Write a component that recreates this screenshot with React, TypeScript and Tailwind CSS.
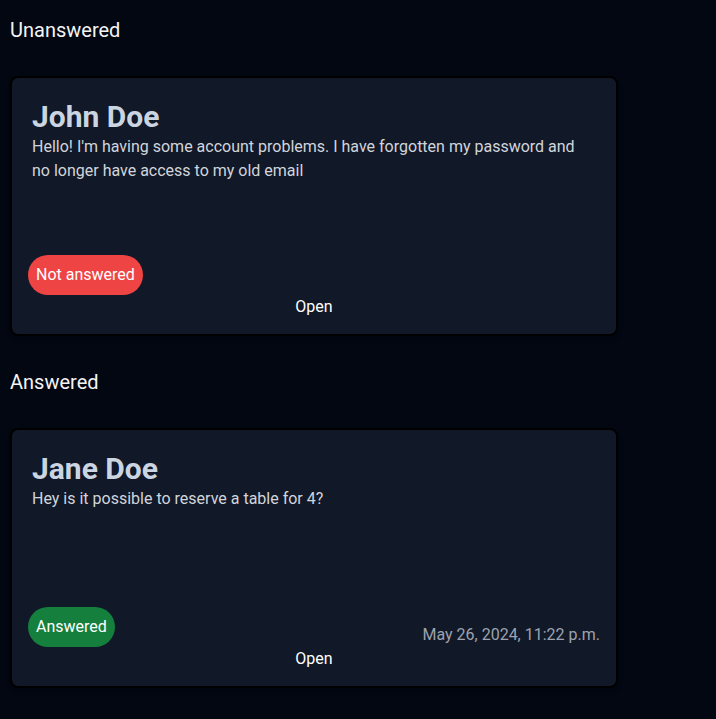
import React from "react";

type Msg = {
  name: string;
  text: string;
  answered: boolean;
  date?: string;
};

function Card({ m }: { m: Msg }) {
  return (
    <div className="w-[608px] h-[260px] rounded-lg border-2 border-black bg-[#111827] px-4 pt-[17px] pb-[15px] flex flex-col shadow-md">
      <div className="p-1">
        <h2 className="text-[30px] leading-9 font-bold text-[#cbd5e1]">{m.name}</h2>
        <p className="text-base leading-6 text-[#d1d5db]">{m.text}</p>
      </div>
      <div className="mt-auto flex items-end justify-between">
        {m.answered ? (
          <span className="rounded-full bg-[#15803d] px-2 py-2 text-base leading-6 text-white">Answered</span>
        ) : (
          <span className="rounded-full bg-[#ef4444] px-2 py-2 text-base leading-6 text-white">Not answered</span>
        )}
        {m.date ? <span className="text-base leading-6 text-[#9ca3af]">{m.date}</span> : null}
      </div>
      <div className="text-center text-base leading-6 text-white">Open</div>
    </div>
  );
}

export default function App() {
  return (
    <div
      className="min-h-screen bg-[#030712] px-[10px] pt-4 pb-8"
      style={{ fontFamily: "Roboto, 'Liberation Sans', sans-serif" }}
    >
      <section>
        <h1 className="text-xl leading-7 text-[#f3f4f6] mb-8">Unanswered</h1>
        <Card
          m={{
            name: "John Doe",
            text: "Hello! I'm having some account problems. I have forgotten my password and no longer have access to my old email",
            answered: false,
          }}
        />
      </section>
      <section className="mt-8">
        <h1 className="text-xl leading-7 text-[#f3f4f6] mb-8">Answered</h1>
        <Card
          m={{
            name: "Jane Doe",
            text: "Hey is it possible to reserve a table for 4?",
            answered: true,
            date: "May 26, 2024, 11:22 p.m.",
          }}
        />
      </section>
    </div>
  );
}
